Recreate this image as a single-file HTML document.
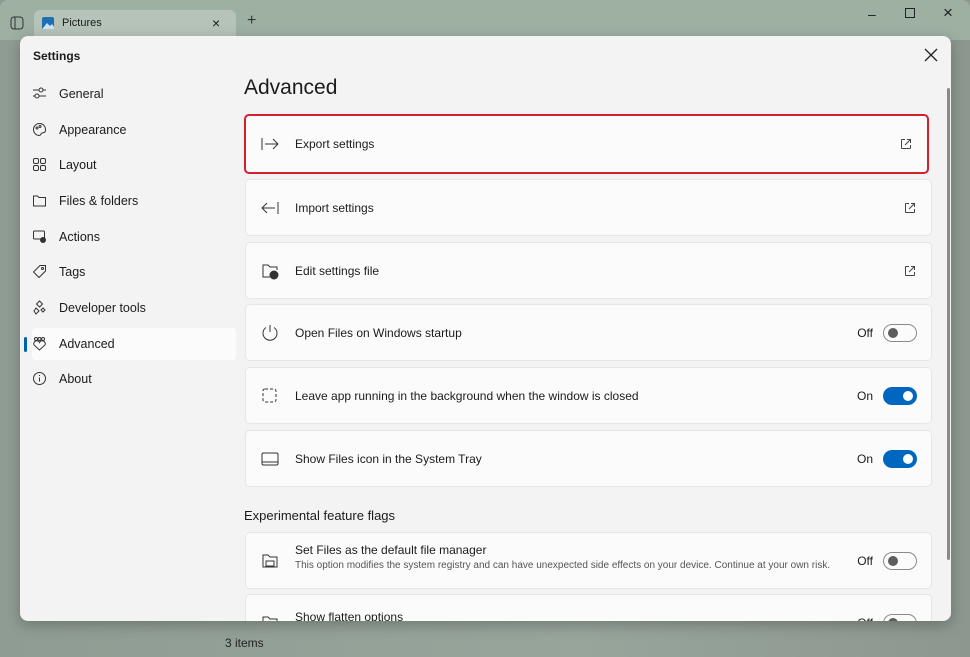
<!DOCTYPE html>
<html><head><meta charset="utf-8"><style>
*{box-sizing:border-box;margin:0;padding:0}
body{width:970px;height:657px;overflow:hidden;font-family:"Liberation Sans",sans-serif;background:linear-gradient(90deg,#8f9c93,#98a59b 60%,#8c978f);position:relative;color:#1b1b1b}
.top{position:absolute;left:0;top:0;width:970px;height:40px;background:#9db0a2;border-radius:8px 8px 0 0}
.tab{position:absolute;left:34px;top:10px;width:202px;height:30px;background:#b5c3b8;border-radius:6px 6px 0 0;font-size:11px}
.dlg{position:absolute;left:20px;top:36px;width:931px;height:585px;background:#f3f3f3;border-radius:8px;box-shadow:0 4px 14px rgba(0,0,0,.25);overflow:hidden}
.nav{position:absolute;left:0;top:0;width:220px}
.ni{position:absolute;left:12px;width:204px;height:32px;font-size:12.5px;line-height:32px;padding-left:27px}
.ni svg{position:absolute;left:0;top:8px}
.sel{background:#fbfbfb;border-radius:4px}
.sel:before{content:"";position:absolute;left:-8px;top:9px;width:3px;height:15px;background:#0063b1;border-radius:2px}
.card{position:absolute;left:225px;width:687px;background:#fbfbfb;border:1px solid #e6e6e6;border-radius:5px;font-size:12px}
.card .t{position:absolute;left:49px;top:50%;transform:translateY(-50%)}
.card svg.i{position:absolute;left:14px;top:50%;margin-top:-10px}
.ext{position:absolute;right:14px;top:50%;margin-top:-7px}
.tg{position:absolute;right:14px;top:50%;margin-top:-9px;width:34px;height:18px;border-radius:9px}
.off{border:1px solid #8a8a8a}
.off:after{content:"";position:absolute;left:4px;top:3px;width:10px;height:10px;border-radius:50%;background:#5d5d5d}
.on{background:#0067c0}
.on:after{content:"";position:absolute;right:4px;top:4px;width:10px;height:10px;border-radius:50%;background:#fff}
.st{position:absolute;right:58px;top:50%;transform:translateY(-50%)}
</style></head><body>
<div class="top"></div>
<svg style="position:absolute;left:10px;top:16px" width="14" height="14"><rect x="1" y="1" width="12" height="12" rx="3" fill="none" stroke="#333"/><line x1="5" y1="1" x2="5" y2="13" stroke="#333"/></svg>
<div class="tab"><svg style="position:absolute;left:8px;top:7px" width="12" height="12"><rect width="12" height="12" rx="2" fill="#1f6fb5"/><path d="M1 11 L5 6 L8 9 L10 7 L12 10 V12 H1Z" fill="#cfe4f7"/></svg><span style="position:absolute;left:28px;top:7px">Pictures</span><span style="position:absolute;left:178px;top:5px;font-size:14px">×</span></div>
<span style="position:absolute;left:247px;top:12px;font-size:16px;color:#333">+</span>
<span style="position:absolute;left:868px;top:6px;font-size:14px">–</span>
<svg style="position:absolute;left:905px;top:8px" width="10" height="10"><rect x=".5" y=".5" width="9" height="9" fill="none" stroke="#222"/></svg>
<span style="position:absolute;left:943px;top:3px;font-size:17px">×</span>
<div style="position:absolute;left:225px;top:636px;font-size:12px;color:#222">3 items</div>
<div class="dlg">
<div style="position:absolute;left:13px;top:13px;font-size:12px;font-weight:bold">Settings</div>
<svg style="position:absolute;left:904px;top:12px" width="14" height="14"><path d="M1 1L13 13M13 1L1 13" stroke="#222" stroke-width="1.3"/></svg>
<div class="ni" style="top:42px"><svg width="15" height="15" fill="none" stroke="#333"><path d="M1 4h13M1 10h13"/><circle cx="9" cy="4" r="2" fill="#f3f3f3"/><circle cx="5" cy="10" r="2" fill="#f3f3f3"/></svg>General</div>
<div class="ni" style="top:78px"><svg width="15" height="15" fill="none" stroke="#333"><path d="M7.5 1.5a6 6 0 1 0 0 12c1.5 0 1-2 2.5-2.5s3.5 0 3.5-3A6 6 0 0 0 7.5 1.5z"/><circle cx="5" cy="6" r="1"/><circle cx="8" cy="4.5" r="1"/></svg>Appearance</div>
<div class="ni" style="top:113px"><svg width="15" height="15" fill="none" stroke="#333"><rect x="1.5" y="1.5" width="5" height="5" rx="1.5"/><rect x="8.5" y="1.5" width="5" height="5" rx="1.5"/><rect x="1.5" y="8.5" width="5" height="5" rx="1.5"/><rect x="8.5" y="8.5" width="5" height="5" rx="1.5"/></svg>Layout</div>
<div class="ni" style="top:149px"><svg width="15" height="15" fill="none" stroke="#333"><path d="M1.5 3h4l1.5 1.5h6.5v8.5h-12z"/></svg>Files &amp; folders</div>
<div class="ni" style="top:185px"><svg width="15" height="15" fill="none" stroke="#333"><rect x="1.5" y="2" width="11" height="8" rx="1"/><circle cx="11" cy="11" r="2.5" fill="#333"/></svg>Actions</div>
<div class="ni" style="top:220px"><svg width="15" height="15" fill="none" stroke="#333"><path d="M8 1.5h5.5V7L7 13.5 1.5 8z"/><circle cx="10.5" cy="4.5" r="1"/></svg>Tags</div>
<div class="ni" style="top:256px"><svg width="15" height="15" fill="none" stroke="#333"><path d="M7.5 1l3 3-3 3-3-3zM4 8l3 3-3 3-2-3zM11 8l2 2-2 2-2-2z"/></svg>Developer tools</div>
<div class="ni sel" style="top:292px"><svg width="15" height="15" fill="none" stroke="#333"><circle cx="4" cy="3" r="1.5"/><circle cx="7.5" cy="3" r="1.5"/><circle cx="11" cy="3" r="1.5"/><path d="M7.5 14L2 9a2.5 2.5 0 0 1 5.5-2.5A2.5 2.5 0 0 1 13 9z"/></svg>Advanced</div>
<div class="ni" style="top:327px"><svg width="15" height="15" fill="none" stroke="#333"><circle cx="7.5" cy="7.5" r="6"/><path d="M7.5 6.5v4M7.5 4v1"/></svg>About</div>
<div style="position:absolute;left:224px;top:40px;font-size:21px">Advanced</div>
<div style="position:absolute;left:927px;top:52px;width:3px;height:472px;background:#8a8a8a;border-radius:2px"></div>

<div class="card" style="top:78px;height:60px;border:2px solid #d3202a;left:224px;width:685px"><svg class="i" width="20" height="20" fill="none" stroke="#333"><path d="M2 4v12M5 10h13M13 5l5 5-5 5"/></svg><span class="t">Export settings</span><svg class="ext" width="14" height="14" fill="none" stroke="#444"><path d="M6 2.5H3a.5.5 0 0 0-.5.5v8a.5.5 0 0 0 .5.5h8a.5.5 0 0 0 .5-.5V8M8 2.5h3.5V6M11.5 2.5L6 8"/></svg></div>
<div class="card" style="top:143px;height:57px"><svg class="i" width="20" height="20" fill="none" stroke="#333"><path d="M18 4v12M15 10H2M7 5l-5 5 5 5"/></svg><span class="t">Import settings</span><svg class="ext" width="14" height="14" fill="none" stroke="#444"><path d="M6 2.5H3a.5.5 0 0 0-.5.5v8a.5.5 0 0 0 .5.5h8a.5.5 0 0 0 .5-.5V8M8 2.5h3.5V6M11.5 2.5L6 8"/></svg></div>
<div class="card" style="top:206px;height:57px"><svg class="i" width="20" height="20" fill="none" stroke="#333"><path d="M10 16H3V4h5l2 2h7v3"/><circle cx="14" cy="14" r="4" fill="#333"/></svg><span class="t">Edit settings file</span><svg class="ext" width="14" height="14" fill="none" stroke="#444"><path d="M6 2.5H3a.5.5 0 0 0-.5.5v8a.5.5 0 0 0 .5.5h8a.5.5 0 0 0 .5-.5V8M8 2.5h3.5V6M11.5 2.5L6 8"/></svg></div>
<div class="card" style="top:268px;height:57px"><svg class="i" width="20" height="20" fill="none" stroke="#333"><path d="M10 2v7M6 4.5a7 7 0 1 0 8 0"/></svg><span class="t">Open Files on Windows startup</span><span class="st">Off</span><div class="tg off"></div></div>
<div class="card" style="top:331px;height:57px"><svg class="i" width="20" height="20" fill="none" stroke="#333" stroke-dasharray="3 2"><rect x="3" y="3" width="13" height="13" rx="2"/></svg><span class="t">Leave app running in the background when the window is closed</span><span class="st">On</span><div class="tg on"></div></div>
<div class="card" style="top:394px;height:57px"><svg class="i" width="20" height="20" fill="none" stroke="#333"><rect x="2" y="4" width="16" height="12" rx="1.5"/><path d="M2 13h16"/></svg><span class="t">Show Files icon in the System Tray</span><span class="st">On</span><div class="tg on"></div></div>
<div style="position:absolute;left:224px;top:472px;font-size:13px">Experimental feature flags</div>
<div class="card" style="top:496px;height:57px"><svg class="i" width="20" height="20" fill="none" stroke="#333"><path d="M3 4h5l2 2h7v10H3z"/><rect x="6" y="10" width="8" height="5"/></svg><span class="t" style="top:10px;transform:none">Set Files as the default file manager<br><span style="font-size:10px;color:#555">This option modifies the system registry and can have unexpected side effects on your device. Continue at your own risk.</span></span><span class="st">Off</span><div class="tg off"></div></div>
<div class="card" style="top:558px;height:57px"><svg class="i" width="20" height="20" fill="none" stroke="#333"><path d="M3 4h5l2 2h7v10H3z"/></svg><span class="t" style="top:15px;transform:none">Show flatten options</span><span class="st">Off</span><div class="tg off"></div></div>
</div>
</body></html>
